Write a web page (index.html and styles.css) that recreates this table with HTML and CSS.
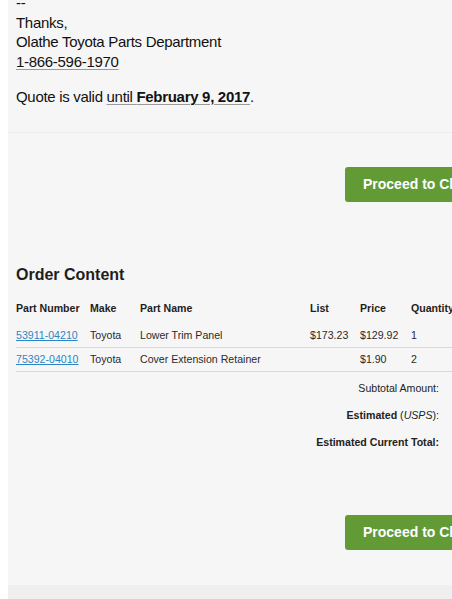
FILE: index.html
```html
<!DOCTYPE html>
<html>
<head>
<meta charset="utf-8">
<link rel="stylesheet" href="styles.css">
</head>
<body>
<div class="page">
  <section class="message">
    <p class="sig">--<br>Thanks,<br>Olathe Toyota Parts Department<br><span class="detected">1-866-596-1970</span></p>
    <p class="valid">Quote is valid <span class="detected">until <b>February 9, 2017</b></span>.</p>
  </section>
  <section class="order">
    <div class="actions"><a class="btn">Proceed to Checkout</a></div>
    <h2 class="title">Order Content</h2>
    <table class="items">
      <colgroup>
        <col class="c1"><col class="c2"><col class="c3"><col class="c4"><col class="c5"><col class="c6"><col class="c7">
      </colgroup>
      <thead>
        <tr><th>Part Number</th><th>Make</th><th>Part Name</th><th>List</th><th>Price</th><th>Quantity</th><th>Total</th></tr>
      </thead>
      <tbody>
        <tr><td><a class="part">53911-04210</a></td><td>Toyota</td><td>Lower Trim Panel</td><td>$173.23</td><td>$129.92</td><td>1</td><td>$129.92</td></tr>
        <tr><td><a class="part">75392-04010</a></td><td>Toyota</td><td>Cover Extension Retainer</td><td></td><td>$1.90</td><td>2</td><td>$3.80</td></tr>
      </tbody>
    </table>
    <div class="totals">
      <span class="label">Subtotal Amount:</span><span class="value">$133.72</span>
      <span class="label"><b>Estimated</b> (<i>USPS</i>):</span><span class="value">$9.95</span>
      <span class="label"><b>Estimated Current Total:</b></span><span class="value"><b>$143.67</b></span>
    </div>
    <div class="actions bottom"><a class="btn">Proceed to Checkout</a></div>
  </section>
  <footer class="foot"></footer>
</div>
</body>
</html>
```
FILE: styles.css
```css
html, body {
  margin: 0;
  padding: 0;
  background: #ffffff;
  overflow: hidden;
}
body {
  font-family: "Liberation Sans", Arial, sans-serif;
  color: #1a1a1a;
}
.page {
  margin-left: 8px;
  width: 600px;
  background: #f6f6f6;
}
.message {
  margin-top: -7px;
  padding: 0 0 26px 8px;
  border-bottom: 1px solid #ececec;
  font-size: 15px;
  line-height: 19.5px;
  letter-spacing: -0.3px;
  color: #111;
}
.message p {
  margin: 0;
}
.message .valid {
  margin-top: 15.5px;
}
.detected {
  text-decoration: underline;
  text-decoration-color: #9a9a9a;
  text-decoration-thickness: 1px;
  text-underline-offset: 2px;
}
.order {
  padding: 34px 0 35px 8px;
  color: #222;
}
.actions {
  display: flex;
  padding-left: 329px;
}
.actions.bottom {
  margin-top: 59px;
}
.btn {
  display: block;
  width: 160px;
  height: 35px;
  line-height: 35px;
  padding-left: 18px;
  background: #629a36;
  border-radius: 3px;
  color: #fff;
  font-weight: bold;
  font-size: 14px;
  white-space: nowrap;
}
.title {
  margin: 63px 0 13px;
  font-size: 16px;
  line-height: 19px;
  font-weight: bold;
  color: #1e1e1e;
}
.items {
  border-collapse: collapse;
  table-layout: fixed;
  width: 520px;
  font-size: 10.6px;
  line-height: 13px;
}
.c1 { width: 74px; }
.c2 { width: 50px; }
.c3 { width: 170px; }
.c4 { width: 50px; }
.c5 { width: 51px; }
.c6 { width: 55px; }
.c7 { width: 70px; }
.items th {
  text-align: left;
  font-weight: bold;
  padding: 5px 0 9px;
  white-space: nowrap;
  color: #1e1e1e;
}
.items td {
  padding: 5px 0;
  border-bottom: 1px solid #d9d9d9;
  white-space: nowrap;
  color: #2a2a2a;
}
.part {
  color: #2b86c8;
  text-decoration: underline;
}
.totals {
  display: grid;
  grid-template-columns: 423px 100px;
  margin-top: 3px;
  font-size: 10.6px;
  line-height: 13px;
  color: #222;
}
.totals span {
  padding: 7px 0;
}
.totals .label {
  text-align: right;
}
.totals .value {
  padding-left: 24px;
}
.foot {
  height: 40px;
  background: #efefef;
}
```
